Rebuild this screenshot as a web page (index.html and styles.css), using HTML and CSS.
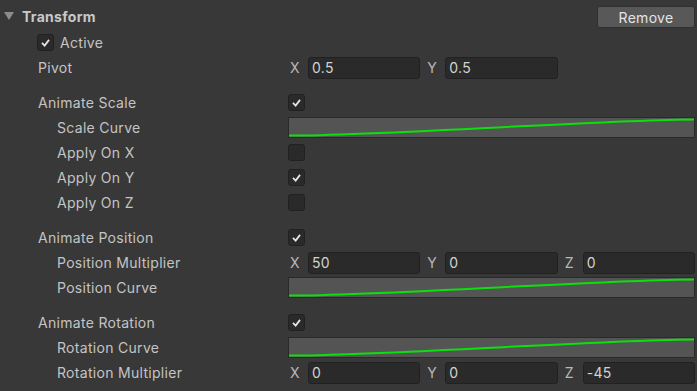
FILE: index.html
```html
<!DOCTYPE html>
<html>
<head>
    <title>Transform Inspector</title>
    <link rel="stylesheet" href="styles.css">
</head>
<body>
    <div class="inspector">
        <div class="header">
            <span class="foldout"></span>
            <span class="title">Transform</span>
            <button class="remove-btn">Remove</button>
        </div>

        <div class="row active-row">
            <span class="checkbox checked"><svg viewBox="0 0 17 17"><path d="M4.5 9 L7.5 12 L12.5 5.5"/></svg></span>
            <span class="active-label">Active</span>
        </div>
        <div class="row">
            <span class="label">Pivot</span>
            <div class="vector">
                <div class="axis"><span>X</span><div class="field">0.5</div></div>
                <div class="axis"><span>Y</span><div class="field">0.5</div></div>
            </div>
        </div>

        <div class="spacer"></div>

        <div class="row">
            <span class="label">Animate Scale</span>
            <span class="checkbox checked"><svg viewBox="0 0 17 17"><path d="M4.5 9 L7.5 12 L12.5 5.5"/></svg></span>
        </div>
        <div class="row">
            <span class="label sub">Scale Curve</span>
            <div class="curve"><svg viewBox="0 0 400 20" preserveAspectRatio="none"><path d="M0 18.5 C 90 18.5, 320 1.5, 400 1.5"/></svg></div>
        </div>
        <div class="row">
            <span class="label sub">Apply On X</span>
            <span class="checkbox"></span>
        </div>
        <div class="row">
            <span class="label sub">Apply On Y</span>
            <span class="checkbox checked"><svg viewBox="0 0 17 17"><path d="M4.5 9 L7.5 12 L12.5 5.5"/></svg></span>
        </div>
        <div class="row">
            <span class="label sub">Apply On Z</span>
            <span class="checkbox"></span>
        </div>

        <div class="spacer"></div>

        <div class="row">
            <span class="label">Animate Position</span>
            <span class="checkbox checked"><svg viewBox="0 0 17 17"><path d="M4.5 9 L7.5 12 L12.5 5.5"/></svg></span>
        </div>
        <div class="row">
            <span class="label sub">Position Multiplier</span>
            <div class="vector">
                <div class="axis"><span>X</span><div class="field">50</div></div>
                <div class="axis"><span>Y</span><div class="field">0</div></div>
                <div class="axis"><span>Z</span><div class="field">0</div></div>
            </div>
        </div>
        <div class="row">
            <span class="label sub">Position Curve</span>
            <div class="curve"><svg viewBox="0 0 400 20" preserveAspectRatio="none"><path d="M0 18.5 C 90 18.5, 320 1.5, 400 1.5"/></svg></div>
        </div>

        <div class="spacer"></div>

        <div class="row">
            <span class="label">Animate Rotation</span>
            <span class="checkbox checked"><svg viewBox="0 0 17 17"><path d="M4.5 9 L7.5 12 L12.5 5.5"/></svg></span>
        </div>
        <div class="row">
            <span class="label sub">Rotation Curve</span>
            <div class="curve"><svg viewBox="0 0 400 20" preserveAspectRatio="none"><path d="M0 18.5 C 90 18.5, 320 1.5, 400 1.5"/></svg></div>
        </div>
        <div class="row">
            <span class="label sub">Rotation Multiplier</span>
            <div class="vector">
                <div class="axis"><span>X</span><div class="field">0</div></div>
                <div class="axis"><span>Y</span><div class="field">0</div></div>
                <div class="axis"><span>Z</span><div class="field">-45</div></div>
            </div>
        </div>
    </div>
</body>
</html>
```

FILE: styles.css
```css
body {
    margin: 0;
    background: #383838;
    font-family: Inter, "Noto Sans", sans-serif;
    font-size: 14px;
    letter-spacing: 0.3px;
    color: #c4c4c4;
}
.inspector {
    padding-right: 2px;
}
.header {
    display: flex;
    align-items: center;
    height: 30px;
    padding-top: 4px;
    box-sizing: border-box;
}
.foldout {
    width: 0;
    height: 0;
    margin-left: 4px;
    margin-right: 8px;
    margin-top: -2px;
    border-left: 5px solid transparent;
    border-right: 5px solid transparent;
    border-top: 8px solid #8c8c8c;
}
.title {
    font-weight: 700;
    color: #c8c8c8;
    flex: 1;
    margin-top: -2px;
}
.remove-btn {
    width: 98px;
    height: 22px;
    background: #585858;
    border: 1px solid #303030;
    border-radius: 3px;
    color: #e4e4e4;
    font-family: inherit;
    font-size: 14px;
    letter-spacing: 0.3px;
    padding: 0;
}
.row {
    display: flex;
    align-items: center;
    height: 25px;
}
.spacer {
    height: 10px;
}
.label {
    width: 250px;
    padding-left: 38px;
    flex-shrink: 0;
}
.label.sub {
    padding-left: 57px;
    width: 231px;
}
.active-row {
    padding-left: 37px;
}
.active-label {
    margin-left: 6px;
}
.checkbox {
    width: 17px;
    height: 17px;
    box-sizing: border-box;
    background: #2a2a2a;
    border: 1px solid #212121;
    border-radius: 3px;
    display: flex;
}
.checkbox svg {
    width: 15px;
    height: 15px;
}
.checkbox path {
    fill: none;
    stroke: #e6e6e6;
    stroke-width: 2;
}
.vector {
    flex: 1;
    display: grid;
    grid-template-columns: repeat(3, 1fr);
    gap: 5px;
}
.axis {
    display: flex;
    align-items: center;
}
.axis span {
    width: 20px;
    padding-left: 2px;
    box-sizing: border-box;
    color: #b8b8b8;
}
.field {
    flex: 1;
    height: 22px;
    box-sizing: border-box;
    background: #2a2a2a;
    border: 1px solid #212121;
    border-radius: 3px;
    color: #d2d2d2;
    padding-left: 3px;
    line-height: 20px;
}
.curve {
    flex: 1;
    height: 21px;
    box-sizing: border-box;
    background: #545454;
    border: 1px solid #2a2a2a;
    display: flex;
}
.curve svg {
    width: 100%;
    height: 100%;
}
.curve path {
    fill: none;
    stroke: #0ce00c;
    stroke-width: 2;
    vector-effect: non-scaling-stroke;
}
```
